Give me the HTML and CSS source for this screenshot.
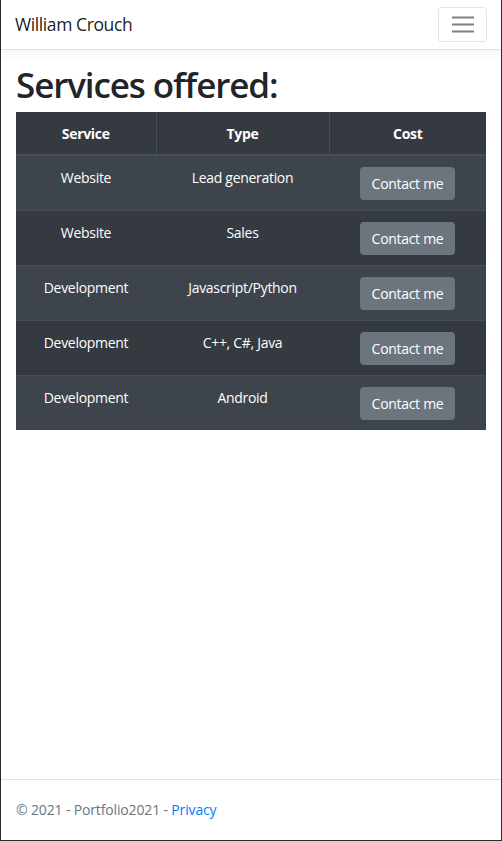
FILE: index.html
```html
<!DOCTYPE html>
<html lang="en">
<head>
<meta charset="utf-8">
<title>Services - Portfolio2021</title>
<link rel="stylesheet" href="styles.css">
</head>
<body>
<div class="frame">
  <header class="navbar">
    <a class="brand" href="#">William Crouch</a>
    <button class="toggler" type="button" aria-label="Toggle navigation">
      <svg width="22" height="17" viewBox="0 0 22 17"><path stroke="rgba(0,0,0,0.5)" stroke-width="2" d="M0 1.5h22M0 8.5h22M0 15.5h22"/></svg>
    </button>
  </header>
  <main class="container">
    <h1 class="title">Services offered:</h1>
    <table class="services">
      <thead>
        <tr><th>Service</th><th>Type</th><th>Cost</th></tr>
      </thead>
      <tbody>
        <tr><td>Website</td><td>Lead generation</td><td><button class="btn">Contact me</button></td></tr>
        <tr><td>Website</td><td>Sales</td><td><button class="btn">Contact me</button></td></tr>
        <tr><td>Development</td><td>Javascript/Python</td><td><button class="btn">Contact me</button></td></tr>
        <tr><td>Development</td><td>C++, C#, Java</td><td><button class="btn">Contact me</button></td></tr>
        <tr><td>Development</td><td>Android</td><td><button class="btn">Contact me</button></td></tr>
      </tbody>
    </table>
  </main>
  <footer class="footer">
    <div class="footer-inner">&copy; 2021 - Portfolio2021 - <a href="#">Privacy</a></div>
  </footer>
</div>
</body>
</html>
```
FILE: styles.css
```css
* { box-sizing: border-box; }
html, body { margin: 0; padding: 0; height: 100%; }
body {
  font-family: "Open Sans", "Noto Sans", sans-serif;
  font-size: 14px;
  line-height: 1.5;
  letter-spacing: -0.3px;
  color: #212529;
  background: #fff;
}
.frame {
  min-height: 100%;
  border: 1px solid #2b2b2b;
  border-top: none;
  display: flex;
  flex-direction: column;
}
.navbar {
  display: flex;
  justify-content: space-between;
  align-items: center;
  padding: 6px 14px 7px 14px;
  border-bottom: 1px solid #dee2e6;
  box-shadow: 0 3.5px 10.5px rgba(0,0,0,0.05);
  margin-bottom: 14px;
}
.brand {
  color: rgba(0,0,0,0.9);
  text-decoration: none;
  font-size: 17.5px;
  line-height: 26px;
  letter-spacing: -0.4px;
  padding: 5px 0;
}
.toggler {
  width: 49px;
  height: 35px;
  border: 1px solid rgba(0,0,0,0.1);
  border-radius: 3.5px;
  background: transparent;
  display: flex;
  align-items: center;
  justify-content: center;
  padding: 0;
}
.toggler svg { display: block; }
.container {
  padding: 0 15px;
  flex: 1;
}
.title {
  font-size: 35px;
  font-weight: 600;
  line-height: 1.2;
  letter-spacing: -1.1px;
  margin: 0 0 6px 0;
}
.services {
  width: 100%;
  border-collapse: collapse;
  background: #343a40;
  color: #fff;
  text-align: center;
}
.services th {
  font-weight: 700;
  padding: 10.5px 10px;
  border: 1px solid #454d55;
  border-top: none;
  border-bottom: 2px solid #454d55;
  line-height: 21px;
}
.services th:first-child { border-left: none; width: 140px; }
.services th:nth-child(2) { width: 173px; }
.services th:last-child { border-right: none; }
.services td {
  padding: 10.5px;
  vertical-align: top;
  border-top: 1px solid #454d55;
}
.services tbody tr:first-child td { border-top: none; }
.services tbody tr:nth-child(odd) { background: #3e444b; }
.btn {
  font-family: inherit;
  font-size: 14px;
  letter-spacing: -0.3px;
  line-height: 21px;
  color: #fff;
  background: #6c757d;
  border: 1px solid #6c757d;
  border-radius: 3.5px;
  padding: 5px 10.5px;
  cursor: pointer;
}
.footer {
  border-top: 1px solid #dee2e6;
  height: 61px;
  color: #6c757d;
  line-height: 60px;
  letter-spacing: -0.15px;
  white-space: nowrap;
}
.footer-inner { padding: 0 15px; }
.footer a { color: #007bff; text-decoration: none; }
```
